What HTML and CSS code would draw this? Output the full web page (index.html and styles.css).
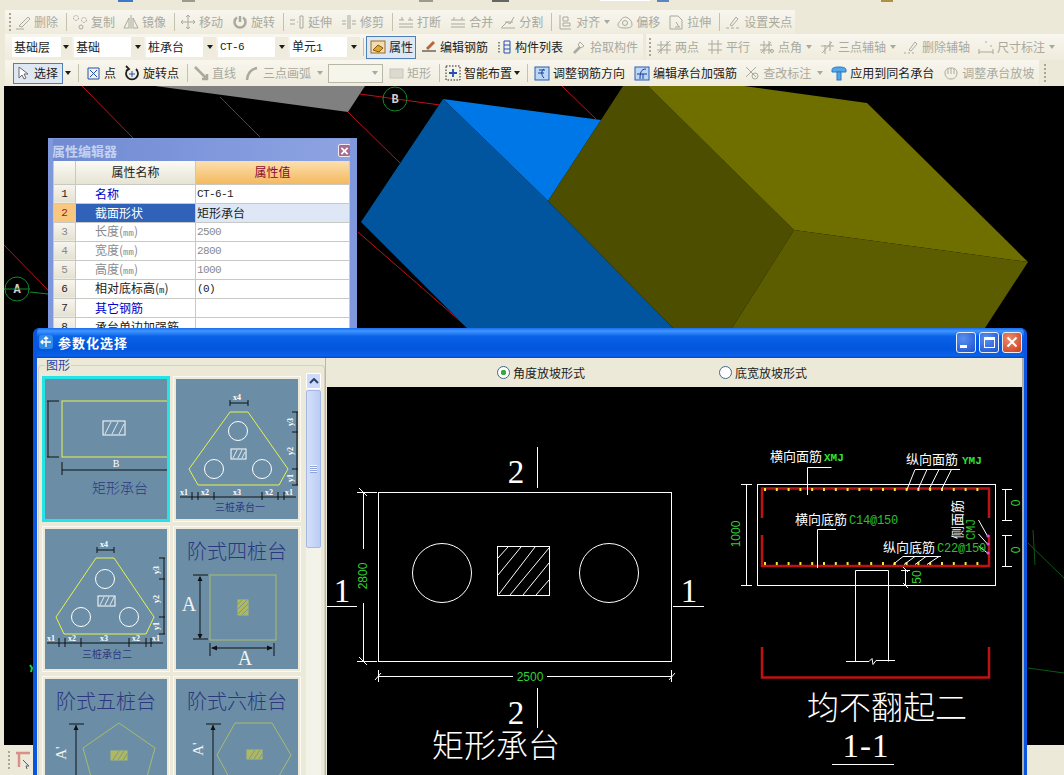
FILE: index.html
```html
<!DOCTYPE html>
<html lang="zh">
<head>
<meta charset="utf-8">
<title>参数化选择</title>
<link rel="stylesheet" href="styles.css">
</head>
<body>
<div class="strip">
  <i class="frag f1"></i><i class="frag f2"></i><i class="frag f3"></i><i class="frag f4"></i><i class="frag f5"></i><i class="frag f6"></i><i class="frag f7"></i>
</div>

<div class="tbrow r1">
  <div class="band b1 off">
    <span class="grip"></span>
    <span class="it m4"><svg class="ico" viewBox="0 0 16 16"><path d="M1 15h8M4 12 13 3l2 2-8 8z"/></svg>删除</span>
    <span class="sep"></span>
    <span class="it"><svg class="ico" viewBox="0 0 16 16"><circle cx="4" cy="4" r="2.5" class="dash"/><circle cx="12" cy="6" r="2.5" class="dash"/><circle cx="9" cy="13" r="2"/></svg>复制</span>
    <span class="it m8"><svg class="ico" viewBox="0 0 16 16"><path d="M8 1v14M6 4 1 14h5zM10 4l5 10h-5z"/></svg>镜像</span>
    <span class="sep"></span>
    <span class="it"><svg class="ico" viewBox="0 0 16 16"><path d="M8 1v14M1 8h14M6 3l2-2 2 2M6 13l2 2 2-2M3 6 1 8l2 2M13 6l2 2-2 2"/></svg>移动</span>
    <span class="it m9"><svg class="ico" viewBox="0 0 16 16"><path class="thick" d="M5 3.5a5.5 5.5 0 1 0 6 0M8 2v6"/></svg>旋转</span>
    <span class="sep"></span>
    <span class="it"><svg class="ico" viewBox="0 0 16 16"><path d="M1 6h5M1 10h5M8 8h1M11 2v12h3V2z"/></svg>延伸</span>
    <span class="it m9"><svg class="ico" viewBox="0 0 16 16"><path d="M7 1v14M9 1v14M1 7h4M11 7h4M1 10h4M11 10h4"/></svg>修剪</span>
    <span class="sep"></span>
    <span class="it"><svg class="ico" viewBox="0 0 16 16"><path d="M1 6h5M10 6h5M1 13h14M1 10h14M4 3v3M12 3v3"/></svg>打断</span>
    <span class="it m9"><svg class="ico" viewBox="0 0 16 16"><path d="M1 6h14M1 13h14M1 10h14M4 3v3M12 3v3"/></svg>合并</span>
    <span class="it m7"><svg class="ico" viewBox="0 0 16 16"><path d="M1 14h14M2 13l5-5 3 2 4-7M5 8h8"/></svg>分割</span>
    <span class="sep"></span>
    <span class="it"><svg class="ico" viewBox="0 0 16 16"><path d="M3 1v14h11M6 3h5v4H6zM6 9h7v3H6z"/></svg>对齐<i class="caret"></i></span>
    <span class="it m7"><svg class="ico" viewBox="0 0 16 16"><path d="M1 11c0-3 2-3 3-5 1-3 6-4 8-1 2 1 3 3 3 6 0 2-2 3-7 3s-7-1-7-3z"/><circle cx="8" cy="9" r="2.5"/></svg>偏移</span>
    <span class="it m8"><svg class="ico" viewBox="0 0 16 16"><path d="M2 2h8l4 4v9H2zM8 8l3 5M7 13h5"/></svg>拉伸</span>
    <span class="sep"></span>
    <span class="it"><svg class="ico" viewBox="0 0 16 16"><path d="M1 14h3M6 14h3M11 14h3M5 11l6-8 2 2-6 7z"/></svg>设置夹点</span>
  </div>
</div>

<div class="tbrow r2">
  <div class="band b2">
    <span class="combo w60"><span class="cval">基础层</span><i class="caret dark"></i></span>
    <span class="combo"><span class="cval">基础</span><i class="caret dark"></i></span>
    <span class="combo"><span class="cval">桩承台</span><i class="caret dark"></i></span>
    <span class="combo"><span class="cval mono">CT-6</span><i class="caret dark"></i></span>
    <span class="combo"><span class="cval">单元<span class="mono">1</span></span><i class="caret dark"></i></span>
    <span class="sep short"></span>
    <span class="it btn w50"><svg class="ico" viewBox="0 0 16 16"><rect class="tan" x="1" y="2" width="14" height="12"/><path class="gold" d="M3 11l5-5 5 3-4 4z"/></svg>属性</span>
    <span class="it m5"><svg class="ico" viewBox="0 0 16 16"><path class="ink" d="M1 12h14"/><path class="pen" d="M6 10l7-7"/></svg>编辑钢筋</span>
    <span class="it m8"><svg class="ico" viewBox="0 0 16 16"><path class="blue" d="M8 2h6v12H8zM8 6h6M8 10h6"/><path class="ink dots" d="M3 3v11"/></svg>构件列表</span>
    <span class="it m8 off"><svg class="ico" viewBox="0 0 16 16"><path class="thick" d="M3 14l6-6"/><path d="M9 3l4 4-3 2-3-3z"/></svg>拾取构件</span>
  </div>
  <div class="band b2b off">
    <span class="grip"></span>
    <span class="it m5"><svg class="ico" viewBox="0 0 16 16"><path d="M5 2v13M11 2v13M1 6h14M1 11h14M2 14 14 2"/></svg>两点</span>
    <span class="it m8"><svg class="ico" viewBox="0 0 16 16"><path d="M5 1v14M11 1v14M1 5h14M1 11h14"/></svg>平行</span>
    <span class="it m9"><svg class="ico" viewBox="0 0 16 16"><path d="M5 2v13M10 2v13M1 6h12M1 11h12M2 14 12 3"/><circle cx="13" cy="12" r="1.5"/></svg>点角<i class="caret"></i></span>
    <span class="it m7"><svg class="ico" viewBox="0 0 16 16"><path d="M6 6v9M11 2v10M2 7h13M3 14 13 3"/></svg>三点辅轴<i class="caret"></i></span>
    <span class="it m7"><svg class="ico" viewBox="0 0 16 16"><path d="M1 14h2M5 14h2M9 14h2M6 11l6-8 2 2-6 7z"/></svg>删除辅轴</span>
    <span class="it m8"><svg class="ico" viewBox="0 0 16 16"><path d="M1 10v5M15 10v5M1 13h14M3 5h0M8 2v2M13 6v2"/></svg>尺寸标注<i class="caret"></i></span>
  </div>
</div>

<div class="tbrow r3">
  <div class="band b3">
    <span class="it btn w50 sel"><svg class="ico" viewBox="0 0 16 16"><path class="grayink" d="M4 2v11l3-3 2 4 2-1-2-4h4z"/></svg>选择</span>
    <i class="caret dark solo"></i>
    <span class="sep short"></span>
    <span class="it"><svg class="ico" viewBox="0 0 16 16"><path class="blue" d="M3 3h11v11H3zM5 5l7 7M12 5l-7 7"/></svg>点</span>
    <span class="it m8"><svg class="ico" viewBox="0 0 16 16"><path class="ink wide" d="M4 4a6 6 0 1 0 8 0M2 1l3 3-3 2"/><path class="blue" d="M8 6v6M5 9h6"/></svg>旋转点</span>
    <span class="sep off"></span>
    <span class="it off"><svg class="ico" viewBox="0 0 16 16"><path class="thick" d="M2 2l12 12M9 14h5V9"/></svg>直线</span>
    <span class="it m8 off"><svg class="ico" viewBox="0 0 16 16"><path class="thick" d="M3 15c0-6 4-11 10-12"/></svg>三点画弧<i class="caret low"></i></span>
    <span class="emptycombo"><i class="caret"></i></span>
    <span class="it m5 off"><svg class="ico" viewBox="0 0 16 16"><rect class="grayfill" x="2" y="4" width="13" height="9"/></svg>矩形</span>
    <span class="sep off"></span>
    <span class="it"><svg class="ico" viewBox="0 0 16 16"><path class="ink dots" d="M1 1h14v14H1z"/><path class="blue wide" d="M8 4v8M4 8h8"/></svg>智能布置<i class="caret dark tight"></i></span>
    <span class="sep near"></span>
    <span class="it"><svg class="ico" viewBox="0 0 16 16"><rect class="sky" x="1" y="2" width="14" height="13"/><path class="navy" d="M5 5h6M10 4c-3 2-3 6 0 9M4 8h6"/></svg>调整钢筋方向</span>
    <span class="it m9"><svg class="ico" viewBox="0 0 16 16"><rect class="sky" x="1" y="2" width="14" height="13"/><path class="navy" d="M12 4C7 4 6 8 6 14M3 9h10M9 9v5"/></svg>编辑承台加强筋</span>
    <span class="it m7 off"><svg class="ico" viewBox="0 0 16 16"><path d="M2 2l10 10M12 2 2 12"/><circle cx="11" cy="11" r="3"/></svg>查改标注<i class="caret low"></i></span>
    <span class="it m8"><svg class="ico" viewBox="0 0 16 16"><path class="cap" d="M1 5c0-2 2-3 7-3s7 1 7 3v2H1z"/><rect class="cap" x="6" y="7" width="4" height="8"/></svg>应用到同名承台</span>
    <span class="it m9 off"><svg class="ico" viewBox="0 0 16 16"><path d="M2 8c0-3 2-5 6-5s6 2 6 5-2 6-6 6-6-3-6-6zM5 3v6M8 3v6M11 3v6"/></svg>调整承台放坡</span>
  </div>
  <span class="grip gap10"></span>
</div>

<main class="work">
  <svg class="scene" viewBox="4 86 1060 659" width="1060" height="659">
    <g class="redline">
      <path d="M82 86 133 138M220 97 260 137M348 112 400 163M4 245 48 290M358 232 467 327M562 86 596 119M360 94 440 105"/>
    </g>
    <polygon class="c-gray" points="155,86 365,86 348,112"/>
    <polygon class="c-blue1" points="443,99 601,120 548,201"/>
    <polygon class="c-blue2" points="443,99 548,201 673,328 467,328 361,222"/>
    <polygon class="c-ol2" points="623,86 648,86 794,230 732,328 673,328 548,201 601,120"/>
    <polygon class="c-ol1" points="648,86 744,86 867,103 1028,262 794,230"/>
    <polygon class="c-ol3" points="794,230 1028,262 985,328 732,328"/>
    <circle class="axis" cx="395" cy="99" r="12"/>
    <text class="axtxt" x="395" y="103">B</text>
    <circle class="axis" cx="17" cy="289" r="12"/>
    <text class="axtxt" x="17" y="293">A</text>
    <path class="greenline" d="M4 289H30M30 292 48 294"/>
    <path class="greenspot" d="M30 665l2 3-1 4"/>
    <path class="dimgreen" d="M1033 530l2 35M1028 543l36 35M1028 668l36 5"/>
  </svg>
</main>

<footer class="status">
  <span class="grip"></span>
  <svg class="stico" viewBox="0 0 16 20"><path class="redish" d="M1 3h14M4 3v14"/><path class="grayink" d="M8 10l6 6-3 0 1 3"/></svg>
</footer>

<section class="prop">
  <header class="prop-title"><span>属性编辑器</span><button class="prop-x" type="button"><svg viewBox="0 0 10 10" width="10" height="10"><path d="M1.5 1.5l7 7M8.5 1.5l-7 7"/></svg></button></header>
  <table class="ptable">
    <colgroup><col class="c0"><col class="c1"><col class="c2"></colgroup>
    <tr class="hd"><th></th><th>属性名称</th><th class="hot">属性值</th></tr>
    <tr><td class="n">1</td><td class="lk">名称</td><td class="v">CT-6-1</td></tr>
    <tr class="cur"><td class="n">2</td><td>截面形状</td><td>矩形承台</td></tr>
    <tr class="gr"><td class="n">3</td><td>长度(<span class="unit">mm</span>)</td><td class="v">2500</td></tr>
    <tr class="gr"><td class="n">4</td><td>宽度(<span class="unit">mm</span>)</td><td class="v">2800</td></tr>
    <tr class="gr"><td class="n">5</td><td>高度(<span class="unit">mm</span>)</td><td class="v">1000</td></tr>
    <tr><td class="n">6</td><td>相对底标高(<span class="unit">m</span>)</td><td class="v">(0)</td></tr>
    <tr><td class="n">7</td><td class="lk">其它钢筋</td><td></td></tr>
    <tr><td class="n">8</td><td>承台单边加强筋</td><td></td></tr>
  </table>
</section>

<section class="dlg">
  <header class="dlg-title">
    <svg class="dlg-ico" viewBox="0 0 16 16"><rect x="1" y="1" width="14" height="14" rx="3" class="dlg-ico-bg"/><path class="dlg-ico-fg" d="M8 3v10M3 8h10M6 5l2-2 2 2M5 6 3 8l2 2"/></svg>
    <span class="dlg-name">参数化选择</span>
    <span class="wbtn"><i class="w-min"></i></span>
    <span class="wbtn"><i class="w-max"></i></span>
    <span class="wbtn close"><svg viewBox="0 0 12 12" width="12" height="12"><path d="M1.5 1.5l9 9M10.5 1.5l-9 9"/></svg></span>
  </header>
  <div class="dlg-body">
    <aside class="panel">
      <span class="legend">图形</span>
      <div class="group">
        <div class="tiles">
          <div class="tile on">
            <svg class="art" viewBox="0 0 122 140">
              <rect class="y" x="17" y="22" width="106" height="56"/>
              <path class="k" d="M3 22v56M2 22h12M2 78h12M17 91h105M17 83v13"/>
              <rect class="w" x="58" y="42" width="22" height="14"/>
              <path class="wt" d="M60 55l6-12M67 55l6-12M74 55l5-10"/>
              <text class="lb" x="71" y="88">B</text>
              <text class="nm14" x="75" y="114">矩形承台</text>
            </svg>
          </div>
          <div class="tile">
            <svg class="art" viewBox="0 0 122 140">
              <polygon class="y" points="54,33 72,33 112,90 103,106 22,106 13,90"/>
              <circle class="w" cx="62" cy="52" r="9.5"/><circle class="w" cx="38" cy="90" r="9.5"/><circle class="w" cx="86" cy="90" r="9.5"/>
              <rect class="w" x="55" y="70" width="15" height="10"/><path class="wt" d="M57 79l4-8M62 79l4-8M66 79l3-6"/>
              <path class="k" d="M54 24h18M54 21v6M72 21v6M121 33v73M116 33h6M116 53h6M116 90h6M116 106h6M4 118h116M16 113v8M22 113v8M38 113v8M86 113v8M102 113v8M108 113v8"/>
              <text class="tiny" x="61" y="21">x4</text><text class="tiny" x="8" y="116">x1</text><text class="tiny" x="29" y="116">x2</text><text class="tiny" x="61" y="116">x3</text><text class="tiny" x="93" y="116">x2</text><text class="tiny" x="113" y="116">x1</text>
              <text class="tiny" transform="rotate(-90 115 43)" x="115" y="45">y3</text><text class="tiny" transform="rotate(-90 115 72)" x="115" y="74">y2</text><text class="tiny" transform="rotate(-90 115 99)" x="115" y="101">y1</text>
              <text class="nm10" x="64" y="132">三桩承台一</text>
            </svg>
          </div>
          <div class="tile">
            <svg class="art" viewBox="0 0 122 140">
              <polygon class="y" points="51,29 69,29 109,88 101,105 19,105 11,88"/>
              <circle class="w" cx="60" cy="50" r="9.5"/><circle class="w" cx="36" cy="88" r="9.5"/><circle class="w" cx="84" cy="88" r="9.5"/>
              <rect class="w" x="53" y="67" width="17" height="10"/><path class="wt" d="M55 76l4-8M60 76l4-8M65 76l4-8"/>
              <path class="k" d="M52 21h17M52 18v6M69 18v6M119 29v76M114 29h6M114 50h6M114 88h6M114 105h6M2 114h116M14 109v9M20 109v9M36 109v9M84 109v9M101 109v9M106 109v9"/>
              <text class="tiny" x="59" y="18">x4</text><text class="tiny" x="6" y="112">x1</text><text class="tiny" x="27" y="112">x2</text><text class="tiny" x="59" y="112">x3</text><text class="tiny" x="91" y="112">x2</text><text class="tiny" x="111" y="112">x1</text>
              <text class="tiny" transform="rotate(-90 112 41)" x="112" y="43">y3</text><text class="tiny" transform="rotate(-90 112 70)" x="112" y="72">y2</text><text class="tiny" transform="rotate(-90 112 97)" x="112" y="99">y1</text>
              <text class="nm10" x="62" y="129">三桩承台二</text>
            </svg>
          </div>
          <div class="tile">
            <svg class="art" viewBox="0 0 122 140">
              <text class="nm20" x="61" y="30">阶式四桩台</text>
              <rect class="o" x="34" y="46" width="66" height="65"/>
              <rect class="of" x="62" y="71" width="10" height="15"/>
              <path class="hh" d="M62 75l4-4M62 80l9-9M62 85l10-10M66 86l6-6"/>
              <path class="k" d="M24 48v61M17 46h15M17 110h15M36 119h60M34 114v13M98 114v13"/>
              <path class="kf" d="M24 47l-2.500 5h5zM24 110l-2.500-5h5zM35 119l6-2.500v5zM97 119l-6-2.500v5z"/>
              <text class="big" x="13" y="82">A</text><text class="big" x="69" y="136">A</text>
            </svg>
          </div>
          <div class="tile">
            <svg class="art" viewBox="0 0 122 140">
              <text class="nm20" x="61" y="30">阶式五桩台</text>
              <polygon class="o" points="74,44 110,69 98,112 50,112 38,69"/>
              <rect class="of" x="66" y="72" width="16" height="9"/>
              <path class="hh" d="M68 81l6-9M73 81l6-9M78 81l4-6"/>
              <path class="k" d="M31 46v90M24 45h15"/><path class="kf" d="M31 46l-2.500 5h5z"/>
              <text class="big sm" transform="rotate(-90 16 74)" x="16" y="79">A'</text>
            </svg>
          </div>
          <div class="tile">
            <svg class="art" viewBox="0 0 122 140">
              <text class="nm20" x="61" y="30">阶式六桩台</text>
              <polygon class="o" points="59,44 96,44 115,76 96,109 59,109 41,76"/>
              <rect class="of" x="71" y="71" width="15" height="9"/>
              <path class="hh" d="M73 80l6-9M78 80l6-9M83 80l3-5"/>
              <path class="k" d="M37 46v90M30 45h15"/><path class="kf" d="M37 46l-2.500 5h5z"/>
              <text class="big sm" transform="rotate(-90 22 70)" x="22" y="75">A'</text>
            </svg>
          </div>
        </div>
        <div class="scroll">
          <span class="sb-up"><svg viewBox="0 0 10 6" width="10" height="6"><path d="M1 5l4-4 4 4"/></svg></span>
          <span class="sb-thumb"><i class="sb-grip"></i></span>
        </div>
      </div>
    </aside>
    <div class="right">
      <div class="radios">
        <label class="radio r-a"><i class="dot on"></i>角度放坡形式</label>
        <label class="radio r-b"><i class="dot"></i>底宽放坡形式</label>
      </div>
      <svg class="draw" viewBox="327 387 695 388" width="695" height="388">
        <!-- plan -->
        <rect class="ln" x="378.500" y="492.500" width="293" height="169"/>
        <circle class="ln" cx="442" cy="573" r="29.500"/>
        <circle class="ln" cx="609" cy="573" r="29.500"/>
        <rect class="ln" x="497.500" y="546.500" width="52" height="49"/>
        <path class="ln" d="M498 558l10-11M498 575l23-28M499 594l36-47M510 595l39-47M523 595l26-32M536 595l13-15"/>
        <path class="ln" d="M537.500 447v41M537.500 688v40M327 606.500h30M673 606.500h31M363.500 492v57M363.500 603v58M359 488l8 8M359 657l8 8M357 492.500h20M357 661.500h20M378 676.500h135M547 676.500h125M375 680l6-7M669 680l6-7M378.500 670v12M671.500 670v12"/>
        <text class="num" x="516" y="483">2</text>
        <text class="num" x="516" y="724">2</text>
        <text class="num" x="342" y="602">1</text>
        <text class="num" x="689" y="602">1</text>
        <text class="gt" transform="rotate(-90 363 576)" x="363" y="580">2800</text>
        <text class="gt" x="530" y="681">2500</text>
        <text class="cn32" x="496" y="757">矩形承台</text>
        <!-- section -->
        <rect class="ln" x="757.500" y="484.500" width="238" height="101"/>
        <path class="rd" d="M762 518V488.500H989V518M762 535V566H989V535"/>
        <path class="dots-y" d="M764 489.500H988M764 563.500H988"/>
        <path class="ln" d="M855.500 585V570.500H888.500V661.500M855.500 585V661.500M846 661.500H869l3-3 1 6 3-4H895"/>
        <path class="ln" d="M746.500 484v101M741 484.500h11M741 585.500h11M1005.500 489v32M1002 489.500h10M1002 520.500h10M1005.500 535v32M1002 535.500h10M1002 566.500h10M905.500 570v15M901 570.500h9M903 567l5 5M903 583l5 5"/>
        <path class="ln" d="M831.500 467.500H807.500V495M915 469.500h45M915 469.500l-8 20M927 469.500l-9 20M939 469.500l-10 20M951.500 469.500l-10 20M836 529.500H817.500V568M903 556.500h38M903 556.500l-10 8M915 556.500l-11 8M926 556.500l-11 8M939 556.500l-12 8M978.500 520l9 16M978.500 534l9 10M978.500 546l9 7"/>
        <path class="mg" d="M988 536h.1M988 544h.1M988 553h.1"/>
        <text class="cn13" x="770" y="461">横向面筋</text><text class="gtb" x="824" y="461">XMJ</text>
        <text class="cn13" x="906" y="464">纵向面筋</text><text class="gtb" x="962" y="464">YMJ</text>
        <text class="cn13" x="795" y="524">横向底筋</text><text class="gtl" x="849" y="524">C14@150</text>
        <text class="cn13" x="883" y="552">纵向底筋</text><text class="gtl" x="937" y="552">C22@150</text>
        <text class="cn13" transform="rotate(-90 962 539)" x="962" y="539">侧面筋</text>
        <text class="gtl" transform="rotate(-90 975 540)" x="975" y="540">CMJ</text>
        <text class="gt" transform="rotate(-90 736 534)" x="736" y="538">1000</text>
        <text class="gt" transform="rotate(-90 1016 503)" x="1016" y="507">0</text>
        <text class="gt" transform="rotate(-90 1016 550)" x="1016" y="554">0</text>
        <text class="gt" transform="rotate(-90 917 577)" x="917" y="581">50</text>
        <path class="rd wide3" d="M762 647V677.500H989V647"/>
        <text class="cn32" x="887" y="719">均不翻起二</text>
        <text class="num wide1" x="866" y="757">1-1</text>
        <path class="ln" d="M832 764.500h62"/>
      </svg>
    </div>
  </div>
</section>
</body>
</html>
```
FILE: styles.css
```css
* { box-sizing: border-box; }
html, body { margin: 0; padding: 0; }
body {
  position: relative;
  width: 1064px;
  height: 775px;
  overflow: hidden;
  background: #ece9d8;
  font: 12px/1 "Noto Sans CJK SC", "Liberation Sans", sans-serif;
  color: #1c1c1c;
  display: flex;
  flex-direction: column;
}

/* clipped remains of the row above the visible area */
.strip { height: 9px; display: flex; align-items: flex-start; flex: none; }
.frag { display: block; height: 2px; background: #9a9a90; }
.f1 { width: 15px; margin-left: 118px; background: #3b78c8; }
.f2 { width: 13px; margin-left: 49px; }
.f3 { width: 14px; margin-left: 224px; }
.f4 { width: 17px; margin-left: 59px; background: #666; }
.f5 { width: 50px; margin-left: 91px; height: 1px; background: #fff; }
.f6 { width: 12px; margin-left: 7px; background: #5c83c4; }
.f7 { width: 12px; margin-left: 212px; background: #b09040; }

/* toolbars */
.tbrow { display: flex; flex: none; align-items: center; }
.r1 { height: 25px; }
.r2 { height: 26px; }
.r3 { height: 26px; }
.band {
  display: flex;
  align-items: center;
  height: 100%;
  background: linear-gradient(#f8f6ee, #efecdd);
  margin-left: 5px;
  white-space: nowrap;
}
.b1 { width: 790px; padding-left: 4px; height: 24px; }
.b2 { width: 638px; padding-left: 7px; }
.b2 .combo + .combo { margin-left: 2px; }
.b2b { width: 418px; margin-left: 3px; padding-left: 3px; flex: none; }
.b3 { width: 1034px; padding-left: 8px; }
.off { color: #a9a99e; }

.grip {
  display: block;
  flex: none;
  width: 2px;
  height: 18px;
  background: repeating-linear-gradient(#a8a698 0 2px, transparent 2px 4px);
}
.gap10 { margin-left: 5px; }
.sep { display: block; flex: none; width: 1px; height: 18px; background: #c4c1ae; margin: 0 5px 0 8px; }
.sep.short { margin-left: 3px; margin-right: 2px; }
.r3 .sep.short { margin-left: 7px; margin-right: 6px; }
.sep.near { margin-left: 7px; margin-right: 6px; }

.it { display: flex; align-items: center; flex: none; gap: 3px; height: 16px; line-height: 16px; }
.m4 { margin-left: 4px; }
.m5 { margin-left: 5px; }
.m6 { margin-left: 6px; }
.m7 { margin-left: 7px; }
.m8 { margin-left: 8px; }
.m9 { margin-left: 9px; }

.ico { width: 16px; height: 16px; flex: none; display: block; fill: none; stroke: currentColor; stroke-width: 1; }
.ico .thick { stroke-width: 2.5; }
.ico .dash { stroke-dasharray: 2 1; }
.ico .ink { stroke: #222; }
.ico .wide { stroke-width: 1.8; }
.ico .dots { stroke-dasharray: 1.5 1.5; }
.ico .pen { stroke: #b9673a; stroke-width: 3; }
.ico .blue { stroke: #2450b0; }
.ico .tan { fill: #f3dcb0; stroke: #9c6a28; }
.ico .gold { fill: #e5a62a; stroke: #7c5a18; }
.ico .grayink { fill: #fff; stroke: #6a6a70; }
.ico .grayfill { fill: #dcdad0; stroke: #c8c6ba; }
.ico .sky { fill: #bcd6f5; stroke: #2a5db0; }
.ico .navy { stroke: #1a3c90; }
.ico .cap { fill: #54a8e8; stroke: #2a78c0; }

.caret {
  display: block;
  flex: none;
  width: 0;
  height: 0;
  margin-left: 1px;
  border-style: solid;
  border-width: 4px 3.5px 0;
  border-color: #a9a99e transparent transparent;
}
.caret.dark { border-top-color: #1c1c1c; }
.caret.tight { margin-left: -1px; }
.caret.low { margin-left: 3px; }
.caret.solo { margin-left: 2px; }

.combo {
  display: flex;
  align-items: center;
  flex: none;
  width: 70px;
  height: 20px;
  background: linear-gradient(90deg, #fff 82%, #efecdd 82%);
  padding-left: 2px;
}
.combo.w60 { width: 60px; }
.cval { flex: 1; }
.combo .caret { margin-right: 3px; }
.mono { font-family: "Liberation Mono", monospace; font-size: 11px; letter-spacing: -.6px; }

.btn { height: 23px; padding-left: 3px; border: 1px solid #4e7fb8; background: #dfe8f2; }
.w50 { width: 50px; }
.sel { height: 21px; padding-left: 1px; }

.emptycombo {
  display: flex;
  align-items: center;
  justify-content: flex-end;
  flex: none;
  width: 55px;
  height: 19px;
  margin-left: 5px;
  padding-right: 4px;
  background: #f6f5ec;
  border: 1px solid #b9b7a8;
}

/* workspace */
.work { flex: 1; min-height: 0; padding-left: 4px; }
.scene { display: block; background: #000; }
.redline { fill: none; stroke: #c01018; stroke-width: 1; }
.c-gray { fill: #808080; }
.c-blue1 { fill: #0077e6; }
.c-blue2 { fill: #00559e; }
.c-ol1 { fill: #6f6f00; }
.c-ol2 { fill: #4e4e00; }
.c-ol3 { fill: #5c5c00; }
.axis { fill: none; stroke: #0e8a2a; }
.axtxt { fill: #cfcfcf; font: bold 12px "Liberation Mono", monospace; text-anchor: middle; }
.greenline { fill: none; stroke: #128a2e; }
.greenspot { fill: none; stroke: #0dd840; stroke-width: 2; }
.dimgreen { fill: none; stroke: #0b5a14; }

.status { flex: none; height: 30px; display: flex; align-items: center; padding-left: 8px; gap: 5px; background: #ece9d8; }
.stico { width: 16px; height: 20px; fill: none; }
.redish { stroke: #d89088; stroke-width: 2.5; }
.stico .grayink { stroke: #55606a; fill: #dfe3e6; }

/* property editor window */
.prop {
  position: absolute;
  left: 48px;
  top: 138px;
  width: 309px;
  height: 200px;
  background: #fff;
  border: solid #7f97dc;
  border-width: 1px 7px 0 5px;
  overflow: hidden;
}
.prop-title {
  height: 22px;
  margin-left: -5px;
  margin-right: -7px;
  padding: 0 6px 0 4px;
  display: flex;
  align-items: center;
  justify-content: space-between;
  background: linear-gradient(90deg, #6f8ad0, #7f97dc 50%, #8ea4e2);
  color: #c4d2f2;
  font-weight: 700;
  font-size: 13px;
}
.prop-x {
  width: 13px;
  height: 13px;
  padding: 1px;
  margin: 0;
  display: flex;
  border: 1px solid #f0e9f0;
  border-radius: 2px;
  background: #a86a90;
}
.prop-x svg { fill: none; stroke: #fff; stroke-width: 2; }
.ptable { width: 297px; table-layout: fixed; border-collapse: collapse; }
.c0 { width: 22px; }
.c1 { width: 120px; }
.ptable td, .ptable th {
  height: 19px;
  padding: 0;
  border: 1px solid #c8c8c4;
  overflow: hidden;
  white-space: nowrap;
  font-weight: 400;
}
.ptable td:nth-child(2) { padding-left: 19px; }
.ptable td:nth-child(3) { padding-left: 1px; }
.hd th { height: 23px; text-align: center; background: linear-gradient(#fbfaf5, #e6e3d3); font-size: 12px; border-top: 0; }
.hd .hot { background: linear-gradient(#fbdfae, #f4b95f); color: #8a0a30; }
.n { text-align: center; background: linear-gradient(#f7f6ee, #e4e1d1); font: 11px "Liberation Mono", monospace; }
.v { font: 11px "Liberation Mono", monospace; letter-spacing: -.6px; }
.lk { color: #0000c8; }
.gr, .gr td { color: #8a8a8a; }
.unit { font: 9px "Liberation Mono", monospace; }
.cur td { background: #dde7f5; }
.cur td:nth-child(2) { background: #2f62b8; color: #fff; }
.cur .n { background: #f8c880; color: #a01818; }

/* parametric dialog */
.dlg {
  position: absolute;
  left: 33px;
  top: 328px;
  width: 994px;
  height: 447px;
  border: solid #0a55e0;
  border-width: 0 3px 0 4px;
  display: flex;
  flex-direction: column;
  overflow: hidden;
  border-radius: 6px 6px 0 0;
  background: #0a55e0;
}
.dlg-title {
  flex: none;
  height: 30px;
  margin: 0 -3px 0 -4px;
  padding: 0 5px 2px 5px;
  display: flex;
  align-items: center;
  gap: 3px;
  background: linear-gradient(#1a6cf0, #3f97ff 10%, #0a62e8 28%, #0255dd 70%, #0a62ea 92%, #0846c4);
}
.dlg-ico { width: 16px; height: 16px; flex: none; margin-right: 1px; fill: none; }
.dlg-ico-bg { fill: #2f8ae8; }
.dlg-ico-fg { stroke: #fff; stroke-width: 1.4; }
.dlg-name { flex: 1; color: #fff; font-size: 13px; font-weight: 700; letter-spacing: 1px; }
.wbtn {
  flex: none;
  width: 20px;
  height: 21px;
  display: flex;
  align-items: center;
  justify-content: center;
  border: 1px solid #e8eef8;
  border-radius: 3px;
  background: radial-gradient(circle at 35% 30%, #5a90f0, #1a50d0);
}
.wbtn.close { background: radial-gradient(circle at 35% 30%, #ee8a68, #cc3a1c); }
.wbtn svg { fill: none; stroke: #fff; stroke-width: 2; }
.w-min { display: block; width: 7px; height: 3px; background: #fff; margin: 9px 6px 0 0; }
.w-max { display: block; width: 11px; height: 11px; border: 1px solid #fff; border-top-width: 3px; }
.dlg-body { flex: 1; min-height: 0; display: flex; background: #ece9d8; border-right: 2px solid #aeaea6; }

.panel { position: relative; flex: none; width: 289px; border-right: 1px solid #b8b6a6; padding-top: 7px; }
.legend { position: absolute; left: 8px; top: 0; padding: 0 1px; background: #ece9d8; color: #1d44a8; line-height: 13px; }
.group { margin-left: 1px; display: flex; padding: 10px 0 0 3px; border: 1px solid #d4d1c0; border-bottom: 0; border-radius: 4px 4px 0 0; height: 500px; }
.tiles { flex: none; width: 260px; display: grid; grid-template-columns: 128px 128px; grid-auto-rows: 146px; gap: 4px 3px; }
.tile { padding: 3px; background: #ece9d8; box-shadow: inset 0 0 0 1px #faf9f2; }
.tile.on { background: #25e4e8; box-shadow: none; }
.art { display: block; width: 122px; height: 140px; background: #6b8ea6; }
.y { fill: none; stroke: #e6f24c; }
.w { fill: none; stroke: #fff; }
.wt { fill: none; stroke: #fff; stroke-width: .8; }
.k { fill: none; stroke: #111; }
.kf { fill: #111; }
.o { fill: none; stroke: #a9bb6a; }
.of { fill: #b0b85e; stroke: #a9bb6a; }
.hh { fill: none; stroke: #6b8ea6; stroke-width: .8; }
.lb { fill: #fff; font: 10px "Liberation Serif", serif; text-anchor: middle; }
.tiny { fill: #fff; font: bold 8px "Liberation Serif", serif; text-anchor: middle; }
.big { fill: #f2f4f0; font: 20px "Liberation Serif", serif; text-anchor: middle; }
.big.sm { font-size: 15px; }
.nm10, .nm14, .nm20 { fill: #2b3880; text-anchor: middle; font-family: "Noto Sans CJK SC", sans-serif; }
.nm10 { font-size: 10px; }
.nm14 { font-size: 14px; font-weight: 300; }
.nm20 { font-size: 20px; font-weight: 300; }

.scroll { flex: none; width: 15px; margin: -3px 0 0 4px; display: flex; flex-direction: column; gap: 1px; background: #f4f3ea; }
.sb-up {
  height: 16px;
  display: flex;
  align-items: center;
  justify-content: center;
  background: #cddbf8;
  border: 1px solid #fff;
  border-radius: 2px;
}
.sb-up svg { fill: none; stroke: #30406c; stroke-width: 2; }
.sb-thumb {
  height: 158px;
  display: flex;
  align-items: center;
  justify-content: center;
  background: linear-gradient(90deg, #d4e0fa, #bccdf5);
  border: 1px solid #a5b8e8;
  border-radius: 2px;
}
.sb-grip { display: block; width: 7px; height: 8px; background: repeating-linear-gradient(#f2f5fd 0 1px, #8fa5da 1px 2px); }

.right { flex: 1; min-width: 0; display: flex; flex-direction: column; margin-left: 1px; }
.radios { flex: none; height: 29px; position: relative; display: flex; align-items: center; padding-left: 170px; }
.radio { display: flex; align-items: center; gap: 3px; flex: none; }
.r-b { margin-left: 134px; }
.dot { display: block; width: 13px; height: 13px; border: 1px solid #3f6a90; border-radius: 50%; background: #fff; position: relative; }
.dot.on { background: radial-gradient(circle, #3aa83a 0 2.500px, #fff 3px); }
.draw { display: block; background: #000; flex: none; }
.ln { fill: none; stroke: #fff; stroke-width: 1; }
.rd { fill: none; stroke: #c01212; stroke-width: 2.5; }
.wide3 { stroke-width: 2.5; }
.dots-y { fill: none; stroke: #f6e642; stroke-width: 3; stroke-dasharray: 2 9.800; }
.mg { fill: none; stroke: #f040e0; stroke-width: 3; stroke-linecap: round; }
.num { fill: #fff; font: 33px "Liberation Serif", serif; text-anchor: middle; }
.wide1 { letter-spacing: 1px; }
.gt { fill: #33d033; font: 12px "Liberation Sans", sans-serif; text-anchor: middle; }
.gtl { fill: #2cc02c; font: 12px "Liberation Mono", monospace; letter-spacing: -.2px; }
.gtb { fill: #33e033; font: bold 11px "Liberation Mono", monospace; }
.cn13 { fill: #fff; font: 13px "Noto Sans CJK SC", sans-serif; }
.cn32 { fill: #fff; font: 300 32px "Noto Sans CJK SC", sans-serif; text-anchor: middle; }
```
